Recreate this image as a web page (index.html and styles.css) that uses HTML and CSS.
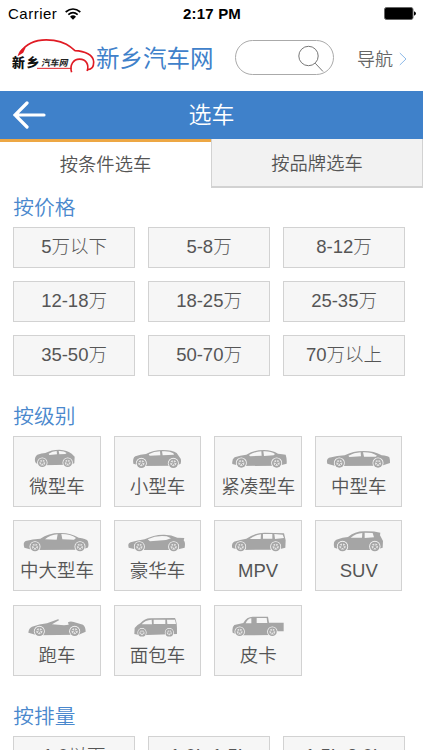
FILE: index.html
```html
<!DOCTYPE html>
<html lang="zh-CN">
<head>
<meta charset="utf-8">
<title>新乡汽车网</title>
<link rel="stylesheet" href="styles.css">
</head>
<body>
<svg class="defs" aria-hidden="true">
  <symbol id="wheel" viewBox="-18 -18 36 36">
    <circle r="16.5" fill="#f6f6f6"/>
    <circle r="14" fill="#a5a5a5"/>
    <circle r="9" fill="#e4e4e4"/>
    <path d="M0 0V-10M0 0L10-4M0 0L7 9M0 0L-7 9M0 0L-10-4" stroke="#a5a5a5" stroke-width="3"/>
  </symbol>
</svg>
<div class="status">
  <span class="carrier">Carrier</span>
  <svg class="wifi" viewBox="0 0 48 36"><g fill="none" stroke="#000" stroke-width="5"><path d="M2 12Q24-6 46 12"/><path d="M10 20Q24 8 38 20"/></g><path d="M15 26Q24 18 33 26L24 35Z"/></svg>
  <span class="time">2:17 PM</span>
  <svg class="battery" viewBox="0 0 32 13"><rect x=".5" y=".5" width="28.5" height="12" rx="2" fill="#000" stroke="#666"/><path d="M30 4.3Q32 5 32 6.5T30 8.7Z"/></svg>
</div>
<header class="header">
  <svg class="logo" viewBox="36 108 255 112">
    <g fill="none" stroke="#e01b24">
      <path d="M61 154C82 124 119 112 163 118C195 122 211 135 227 149C256 150 284 162 284 184C284 200 276 207 266 207" stroke-width="5"/>
      <path d="M112 203H216" stroke-width="3"/>
      <path d="M217 215C210 192 223 175 241 175C261 175 271 192 264 211" stroke-width="5"/>
    </g>
    <path d="M53 166C57 151 66 143 78 139L70 156Z" fill="#e01b24"/>
    <text class="logo-big" x="36" y="199">新</text><text class="logo-big" x="80" y="199">乡</text>
    <text class="logo-small" x="0" y="0" transform="translate(124 197) skewX(-12)">汽车网</text>
  </svg>
  <span class="brand">新乡汽车网</span>
  <div class="search"><svg viewBox="0 0 26 28"><circle cx="10.5" cy="11" r="9.7"/><path d="M17.2 18.2L25 26.5"/></svg></div>
  <a class="nav">导航<svg viewBox="0 0 8 14"><path d="M.8 1L7 7L.8 13"/></svg></a>
</header>
<div class="titlebar">
  <svg class="back" viewBox="0 0 33 28"><path d="M31 14H2M14 2L2 14L14 26"/></svg>
  <h1>选车</h1>
</div>
<nav class="tabs"><div class="tab active">按条件选车</div><div class="tab">按品牌选车</div></nav>
<main>
  <section class="group price">
    <h2>按价格</h2>
    <div class="grid three">
      <div class="cell">5万以下</div><div class="cell">5-8万</div><div class="cell">8-12万</div>
      <div class="cell">12-18万</div><div class="cell">18-25万</div><div class="cell">25-35万</div>
      <div class="cell">35-50万</div><div class="cell">50-70万</div><div class="cell">70万以上</div>
    </div>
  </section>
  <section class="group level">
    <h2>按级别</h2>
    <div class="grid four">
      <div class="car"><svg viewBox="40 140 261 66"><path class="body" d="M106 183Q104 169 113 163Q126 158 137 158Q155 148 179 148Q203 149 216 160L225 169L224 189Q218 193 205 193L128 195L109 189Z"/><path class="glass" d="M147 160Q158 152 171 152L172 162L149 164ZM177 152Q193 151 201 158L197 161L179 162Z"/><use href="#wheel" x="111" y="170" width="34" height="34"/><use href="#wheel" x="187" y="170" width="34" height="34"/></svg>微型车</div>
      <div class="car"><svg viewBox="342 140 261 66"><path class="body" d="M400 190Q397 173 406 168Q421 162 438 161Q460 149 488 149Q518 149 530 158L540 172Q545 177 542 190Q533 196 519 196L424 197Z"/><path class="glass" d="M446 162Q462 153 480 153L481 165L449 166ZM486 153Q508 151 520 159L522 163L488 165Z"/><use href="#wheel" x="406" y="171" width="36" height="36"/><use href="#wheel" x="502" y="171" width="36" height="36"/></svg>小型车</div>
      <div class="car"><svg viewBox="233 140 261 66"><path class="body" d="M285 191Q283 176 292 171Q308 165 327 163Q350 149 380 149Q404 149 422 160Q436 161 445 163Q449 174 448 190L424 196L309 197Z"/><path class="glass" d="M335 164Q352 154 372 153L373 166L338 168ZM378 153Q400 152 413 161L409 165L380 167Z"/><use href="#wheel" x="294" y="170" width="36" height="36"/><use href="#wheel" x="400" y="170" width="36" height="36"/></svg>紧凑型车</div>
      <div class="car"><svg viewBox="330 140 261 66"><path class="body" d="M367 190Q363 176 372 172Q398 166 419 165Q444 152 475 152Q509 152 530 165Q547 166 553 171Q556 181 555 188L530 196L391 197Z"/><path class="glass" d="M430 166Q447 157 467 156L468 168L433 170ZM474 156Q500 155 516 166L512 169L477 169Z"/><use href="#wheel" x="385" y="170" width="36" height="36"/><use href="#wheel" x="501" y="170" width="36" height="36"/></svg>中型车</div>
      <div class="car"><svg viewBox="40 63 261 66"><path class="body" d="M74 113Q69 97 78 93Q99 87 122 86Q146 69 180 69Q213 68 237 83Q259 86 264 92Q269 106 264 113L242 119L99 120Z"/><path class="glass" d="M136 88Q151 74 174 73L171 89ZM185 72Q214 72 229 84L223 89L188 88Z"/><use href="#wheel" x="88" y="92" width="36" height="36"/><use href="#wheel" x="223" y="92" width="36" height="36"/></svg>中大型车</div>
      <div class="car"><svg viewBox="342 63 261 66"><path class="body" d="M386 113Q382 100 392 97Q413 91 434 88Q461 74 489 74Q513 73 532 83L553 84L551 91Q557 97 554 113L526 120L415 120Z"/><path class="glass" d="M443 88Q470 75 500 79L513 85L498 90L450 94Z"/><use href="#wheel" x="400" y="92" width="36" height="36"/><use href="#wheel" x="503" y="92" width="36" height="36"/></svg>豪华车</div>
      <div class="car"><svg viewBox="233 63 261 66"><path class="body" d="M285 114Q281 101 290 95Q308 89 327 86Q352 68 382 68L440 70L445 91L444 113L420 119L307 120Z"/><path class="glass" d="M337 87Q352 75 371 73L370 87ZM377 72H405V86H377ZM411 72L436 74L440 84L413 87Z"/><use href="#wheel" x="292" y="92" width="36" height="36"/><use href="#wheel" x="397" y="92" width="36" height="36"/></svg>MPV</div>
      <div class="car"><svg viewBox="330 63 261 66"><path class="body" d="M388 113Q383 94 394 89Q414 82 429 81Q448 64 478 64Q505 63 526 68L525 76L534 93L533 113L510 120L409 120Z"/><path class="glass" d="M437 83Q453 70 472 69L471 83ZM479 68L503 69L507 82L479 84Z"/><use href="#wheel" x="394" y="91" width="37" height="37"/><use href="#wheel" x="491" y="91" width="37" height="37"/></svg>SUV</div>
      <div class="car"><svg viewBox="40 62 261 66"><path class="body" d="M86 112Q87 99 97 94Q119 86 142 84L175 72L179 74L157 87L193 90L207 88L205 81Q212 77 222 80L250 88Q258 94 258 109L237 118L113 120Z"/><use href="#wheel" x="101" y="90" width="36" height="36"/><use href="#wheel" x="207" y="90" width="36" height="36"/></svg>跑车</div>
      <div class="car"><svg viewBox="342 62 261 66"><path class="body" d="M403 116L404 98Q413 87 421 84Q435 69 450 69L525 68Q532 79 531 116L420 120Z"/><path class="glass" d="M425 87Q435 74 455 73L456 87ZM461 73H496V86H461ZM501 73H525L528 86H502Z"/><use href="#wheel" x="411" y="97" width="30" height="30"/><use href="#wheel" x="493" y="97" width="30" height="30"/></svg>面包车</div>
      <div class="car"><svg viewBox="642 62 261 66"><path class="body" d="M695 112Q692 96 700 89L727 83Q737 64 755 64H801L804 82H848V108H825L815 119L714 120Z"/><path class="glass" d="M734 84Q741 69 751 69V84ZM767 68H797L799 83H767Z"/><use href="#wheel" x="699" y="92" width="34" height="34"/><use href="#wheel" x="797" y="92" width="34" height="34"/></svg>皮卡</div>
    </div>
  </section>
  <section class="group volume">
    <h2>按排量</h2>
    <div class="grid three"><div class="cell">1.0以下</div><div class="cell">1.0L-1.5L</div><div class="cell">1.5L-2.0L</div></div>
  </section>
</main>
</body>
</html>
```
FILE: styles.css
```css
* { box-sizing: border-box; }
html { height: 100%; overflow: hidden; }
body {
  margin: 0;
  height: 750px;
  overflow: hidden;
  background: #fff;
  color: #555;
  font-family: "Liberation Sans", "Noto Sans CJK SC", sans-serif;
  font-weight: 350;
}
svg { display: block; flex: none; }
.defs { width: 0; height: 0; position: absolute; }
.status {
  height: 27px;
  padding: 0 7px 0 8px;
  display: grid;
  grid-template-columns: 57px 1fr auto 1fr 25px 32px;
  align-items: center;
  color: #000;
  font-size: 15px;
}
.carrier { letter-spacing: .5px; }
.wifi { width: 16px; height: 12px; }
.time { font-weight: 700; letter-spacing: .2px; }
.battery { width: 32px; height: 13px; grid-column: 6; }
.header {
  height: 64px;
  padding: 0 16px 0 12px;
  display: flex;
  align-items: center;
  color: #3f81ca;
}
.logo { width: 84px; height: 37px; margin-top: -8px; }
.logo-big { font: 900 39px "Noto Sans CJK SC", sans-serif; fill: #111; }
.logo-small { font: 700 27px "Noto Sans CJK SC", sans-serif; fill: #222; }
.brand { width: 139px; font-size: 23.5px; font-weight: 400; line-height: 64px; white-space: nowrap; }
.search {
  width: 99px;
  height: 35px;
  margin-top: -3px;
  padding: 4px 12px 0 62px;
  border: 1px solid #aaa;
  border-radius: 18px;
}
.search svg { width: 26px; height: 28px; fill: none; stroke: #777; stroke-width: 1; }
.nav {
  margin-top: -3px;
  margin-left: auto;
  display: flex;
  align-items: center;
  gap: 6px;
  color: #666;
  font-size: 18px;
}
.nav svg { width: 8px; height: 14px; margin-top: 2px; fill: none; stroke: #8db9e8; }
.titlebar {
  height: 48px;
  padding-left: 13px;
  display: grid;
  grid-template-columns: 33px 1fr 46px;
  align-items: center;
  background: #3f81ca;
  color: #fff;
}
.back { width: 33px; height: 28px; fill: none; stroke: #fff; stroke-width: 3.2; stroke-linecap: round; }
.titlebar h1 { margin: 0; text-align: center; font-size: 23px; line-height: 46px; font-weight: 350; }
.tabs { height: 49px; display: grid; grid-template-columns: 211px 212px; }
.tab {
  height: 49px;
  border: 1px solid #d2d2d2;
  border-width: 0 1px 2px;
  background: #f2f2f2;
  font-size: 18.3px;
  line-height: 50px;
  text-align: center;
}
.tab.active { border: 0; border-top: 3px solid #eda744; background: #fff; line-height: 45px; }
.group { padding: 0 13.3px; }
.group h2 { margin: 0; color: #4a88cd; font-size: 20.7px; line-height: 39.3px; font-weight: 350; }
.price { height: 208.5px; }
.level { height: 300px; }
.grid { display: grid; }
.three { grid-template-columns: repeat(3, 121.5px); gap: 13.5px; }
.cell {
  height: 40.5px;
  border: 1px solid #d2d2d2;
  background: #f6f6f6;
  font-size: 18.5px;
  font-weight: 300;
  line-height: 37.6px;
  text-align: center;
}
.four { grid-template-columns: repeat(4, 87.3px); gap: 13.5px 13.3px; }
.car {
  height: 71px;
  padding-top: 10px;
  display: flex;
  flex-direction: column;
  align-items: center;
  border: 1px solid #d2d2d2;
  background: #f6f6f6;
  font-size: 18.5px;
  line-height: 35px;
  white-space: nowrap;
}
.car svg { width: 87px; height: 22px; }
.body { fill: #a5a5a5; }
.glass { fill: #f6f6f6; }
```
